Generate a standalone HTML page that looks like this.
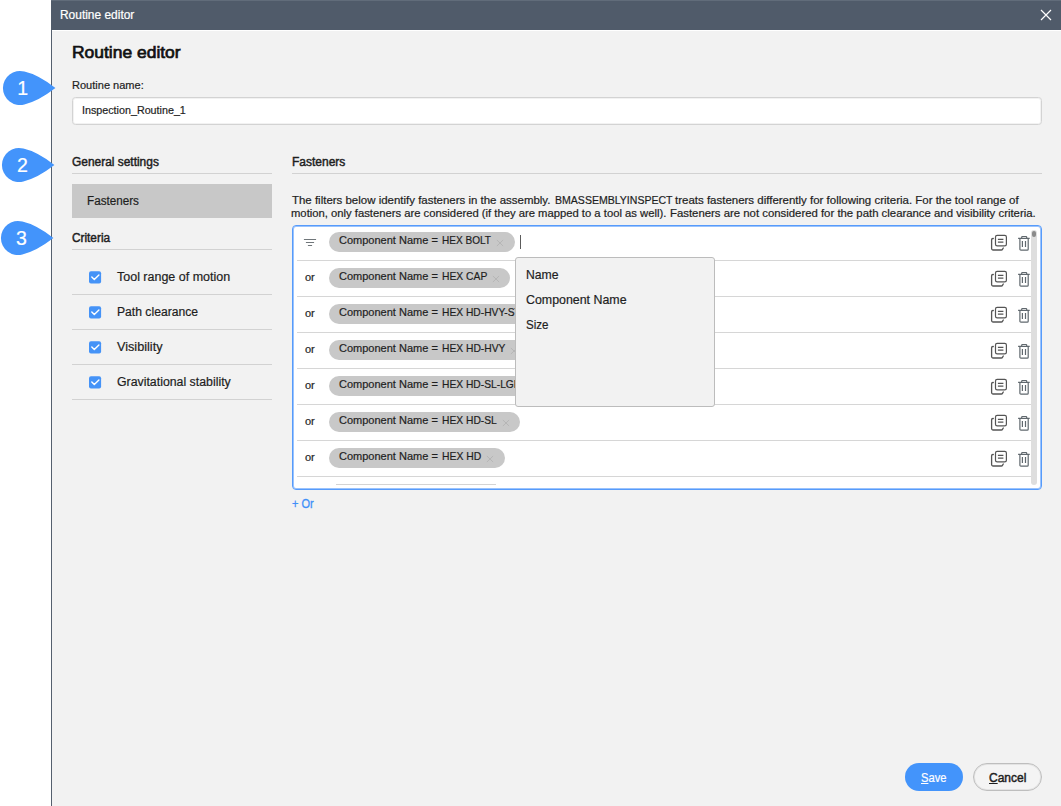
<!DOCTYPE html>
<html lang="en"><head><meta charset="utf-8"><title>Routine editor</title>
<style>
*{box-sizing:border-box;margin:0;padding:0}
html,body{width:1061px;height:806px;overflow:hidden;background:#fff}
body{font-family:"Liberation Sans",Arial,sans-serif;color:#1e1e1e;position:relative;font-size:12px}
.abs{position:absolute}
.t{position:absolute;white-space:nowrap;line-height:1;display:inline-block;transform-origin:0 50%;-webkit-text-stroke:0.2px currentColor}
#dlg{position:absolute;left:51px;top:0;width:1010px;height:806px;background:#f2f2f2;border-left:1px solid #55606e}
#tb{position:absolute;left:51px;top:0;width:1010px;height:30px;background:#505b6a;border-top:1px solid #616c7a}
#tbl{position:absolute;left:52px;top:30px;width:1009px;height:1px;background:#fff}
u{text-underline-offset:1px;text-decoration-thickness:1px}
.hr{position:absolute;height:1px;background:#d2d2d2}
.cb{position:absolute;left:89px;width:12px;height:12px;border-radius:2px;background:#4593f7}
.chip{position:absolute;left:329px;height:20px;border-radius:10px;background:#c8c8c8}
.sep{position:absolute;left:297px;width:734px;height:1px;background:#d6d6d6}
</style></head><body>
<div id="dlg"></div><div id="tb"></div><div id="tbl"></div>

<span class="t" id="t_tb" style="left:60.20px;top:9px;font-size:12px;transform:scaleX(0.9949);color:#fff;">Routine editor</span>
<svg class="abs" style="left:1040px;top:9px" width="12" height="12" viewBox="0 0 12 12"><path d="M1 1L11 11M11 1L1 11" stroke="#fff" stroke-width="1.2" fill="none"/></svg>
<svg class="abs" style="left:0px;top:68px" width="60" height="40" viewBox="0 0 60 40"><path d="M24.4 3.6Q38 6.6 55.4 20Q38 33.4 24.4 36.4A17 17 0 1 1 24.4 3.6Z" fill="#4394fb"/></svg>
<span class="t" id="t_m1" style="left:17.30px;top:79px;font-size:19.5px;transform:scaleX(1.0000);color:#fff;">1</span>
<svg class="abs" style="left:-1px;top:145px" width="60" height="40" viewBox="0 0 60 40"><path d="M24.4 3.6Q38 6.6 55.4 20Q38 33.4 24.4 36.4A17 17 0 1 1 24.4 3.6Z" fill="#4394fb"/></svg>
<span class="t" id="t_m2" style="left:17.00px;top:156px;font-size:19.5px;transform:scaleX(1.0000);color:#fff;">2</span>
<svg class="abs" style="left:-2px;top:218px" width="60" height="40" viewBox="0 0 60 40"><path d="M24.4 3.6Q38 6.6 55.4 20Q38 33.4 24.4 36.4A17 17 0 1 1 24.4 3.6Z" fill="#4394fb"/></svg>
<span class="t" id="t_m3" style="left:16.00px;top:229px;font-size:19.5px;transform:scaleX(1.0000);color:#fff;">3</span>
<span class="t" id="t_h1" style="left:71.74px;top:44px;font-size:17px;transform:scaleX(1.0263);-webkit-text-stroke:0.7px currentColor;color:#111;">Routine editor</span>
<span class="t" id="t_rn" style="left:72.20px;top:80px;font-size:11px;transform:scaleX(1.0029);">Routine name:</span>
<div class="abs" style="left:72px;top:97px;width:970px;height:28px;background:#fff;border:1px solid #d3d3d3;border-radius:3.5px;box-shadow:inset 0 0 0 1px rgba(211,211,211,.3)"></div>
<span class="t" id="t_in" style="left:82.30px;top:105px;font-size:11px;transform:scaleX(0.9756);">Inspection_Routine_1</span>
<span class="t" id="t_gs" style="left:71.76px;top:156px;font-size:12px;transform:scaleX(0.9938);-webkit-text-stroke:0.45px currentColor;">General settings</span>
<div class="hr" style="left:72px;top:173px;width:200px"></div>
<div class="abs" style="left:72px;top:184px;width:200px;height:34px;background:#c8c8c8"></div>
<span class="t" id="t_fl" style="left:87.00px;top:195px;font-size:12px;transform:scaleX(0.9739);">Fasteners</span>
<span class="t" id="t_cr" style="left:71.78px;top:232px;font-size:12px;transform:scaleX(0.9845);-webkit-text-stroke:0.45px currentColor;">Criteria</span>
<div class="hr" style="left:72px;top:249px;width:200px"></div>
<svg class="abs" style="left:88px;top:270px" width="15" height="15" viewBox="0 0 15 15"><rect x="1" y="1.35" width="12.1" height="12.2" rx="2" fill="#4593f7"/><path d="M3.8 7.1L6.3 9.6L10.9 5.1" stroke="#fff" stroke-width="1.4" fill="none" stroke-linecap="round" stroke-linejoin="round"/></svg>
<span class="t" id="t_c0" style="left:117.40px;top:271px;font-size:12px;transform:scaleX(1.0404);">Tool range of motion</span>
<div class="hr" style="left:72px;top:294px;width:200px"></div>
<svg class="abs" style="left:88px;top:305px" width="15" height="15" viewBox="0 0 15 15"><rect x="1" y="1.35" width="12.1" height="12.2" rx="2" fill="#4593f7"/><path d="M3.8 7.1L6.3 9.6L10.9 5.1" stroke="#fff" stroke-width="1.4" fill="none" stroke-linecap="round" stroke-linejoin="round"/></svg>
<span class="t" id="t_c1" style="left:117.40px;top:306px;font-size:12px;transform:scaleX(1.0125);">Path clearance</span>
<div class="hr" style="left:72px;top:329px;width:200px"></div>
<svg class="abs" style="left:88px;top:340px" width="15" height="15" viewBox="0 0 15 15"><rect x="1" y="1.35" width="12.1" height="12.2" rx="2" fill="#4593f7"/><path d="M3.8 7.1L6.3 9.6L10.9 5.1" stroke="#fff" stroke-width="1.4" fill="none" stroke-linecap="round" stroke-linejoin="round"/></svg>
<span class="t" id="t_c2" style="left:117.40px;top:341px;font-size:12px;transform:scaleX(1.0553);">Visibility</span>
<div class="hr" style="left:72px;top:364px;width:200px"></div>
<svg class="abs" style="left:88px;top:375px" width="15" height="15" viewBox="0 0 15 15"><rect x="1" y="1.35" width="12.1" height="12.2" rx="2" fill="#4593f7"/><path d="M3.8 7.1L6.3 9.6L10.9 5.1" stroke="#fff" stroke-width="1.4" fill="none" stroke-linecap="round" stroke-linejoin="round"/></svg>
<span class="t" id="t_c3" style="left:117.40px;top:376px;font-size:12px;transform:scaleX(1.0271);">Gravitational stability</span>
<div class="hr" style="left:72px;top:399px;width:200px"></div>
<span class="t" id="t_fh" style="left:291.64px;top:156px;font-size:12px;transform:scaleX(0.9987);-webkit-text-stroke:0.45px currentColor;">Fasteners</span>
<div class="hr" style="left:292px;top:173px;width:750px"></div>
<span class="t" id="t_d1a" style="left:291.75px;top:195px;font-size:11px;transform:scaleX(1.0419);">The filters below identify fasteners in the assembly.</span>
<span class="t" id="t_d1b" style="left:554.69px;top:195px;font-size:11px;transform:scaleX(0.9584);">BMASSEMBLYINSPECT</span>
<span class="t" id="t_d1c" style="left:674.64px;top:195px;font-size:11px;transform:scaleX(1.0433);">treats fasteners differently for following criteria. For the tool range of</span>
<span class="t" id="t_d2a" style="left:291.15px;top:208px;font-size:11px;transform:scaleX(1.0230);">motion, only fasteners are considered (if they are mapped to a tool as well).</span>
<span class="t" id="t_d2b" style="left:669.73px;top:208px;font-size:11px;transform:scaleX(1.0330);">Fasteners are not considered for the path clearance and visibility criteria.</span>
<div class="abs" style="left:292px;top:225px;width:750px;height:265px;background:#fff;border:1px solid #569bfb;border-radius:4px;box-shadow:inset 0 0 0 1px rgba(86,155,251,.6)"></div>
<div class="abs" style="left:1031px;top:229.5px;width:6px;height:255px;background:#dedede;border-radius:3px"></div>
<div class="abs" style="left:1032px;top:230.5px;width:4px;height:6.5px;background:#8a8a8a;border-radius:2px"></div>
<svg class="abs" style="left:303px;top:237px" width="14" height="10" viewBox="0 0 14 10"><path d="M1.3 2.5H12.7M3.3 5.5H10.7M5.3 8.5H8.7" stroke="#70767a" stroke-width="1" stroke-linecap="round" fill="none"/></svg>
<div class="abs" style="left:520px;top:235px;width:1px;height:14px;background:#5c5c5c"></div>
<div class="chip" id="chip0" style="top:232px;width:186px"></div>
<span class="t" id="t_ka0" style="left:338.63px;top:235px;font-size:11px;transform:scaleX(1.0008);">Component Name =</span>
<span class="t" id="t_kb0" style="left:441.55px;top:235px;font-size:11px;transform:scaleX(0.9143);">HEX BOLT</span>
<svg class="abs" style="left:496.3px;top:238.7px" width="8" height="8" viewBox="0 0 8 8"><path d="M0.9 1L7.1 7M7.1 1L0.9 7" stroke="#b6b6b6" stroke-width="1" fill="none"/></svg>
<div class="sep" style="top:260px"></div>
<svg class="abs" style="left:990px;top:234px" width="18" height="18" viewBox="0 0 18 18"><rect x="5.5" y="1.4" width="10.9" height="10.5" rx="1.7" fill="none" stroke="#555" stroke-width="1.2"/><path d="M7.9 5.4H13.4M7.9 8.1H13.4" stroke="#555" stroke-width="1.1" fill="none"/><path d="M3.3 4.5H2.9A1.3 1.3 0 0 0 1.6 5.8V14.5A1.5 1.5 0 0 0 3.1 16H11.2A1.6 1.6 0 0 0 12.6 15.1L13.3 14" stroke="#555" stroke-width="1.3" fill="none" stroke-linecap="round"/></svg>
<svg class="abs" style="left:1017px;top:234px" width="14" height="18" viewBox="0 0 14 18"><path d="M1.1 4.3H12.7M4.7 4.3V3.2A0.7 0.7 0 0 1 5.4 2.5H9A0.7 0.7 0 0 1 9.7 3.2V4.3M2.9 4.3V15.2A1 1 0 0 0 3.9 16.2H10.2A1 1 0 0 0 11.2 15.2V4.3M5.4 6.9V13M8.5 6.9V13" stroke="#60686e" stroke-width="1.2" fill="none"/></svg>
<div class="chip" id="chip1" style="top:268px;width:181px"></div>
<span class="t" id="t_ka1" style="left:338.63px;top:271px;font-size:11px;transform:scaleX(1.0008);">Component Name =</span>
<span class="t" id="t_kb1" style="left:441.53px;top:271px;font-size:11px;transform:scaleX(0.9388);">HEX CAP</span>
<svg class="abs" style="left:491.8px;top:274.7px" width="8" height="8" viewBox="0 0 8 8"><path d="M0.9 1L7.1 7M7.1 1L0.9 7" stroke="#b6b6b6" stroke-width="1" fill="none"/></svg>
<span class="t" id="t_o1" style="left:305.00px;top:272px;font-size:11px;transform:scaleX(1.0000);">or</span>
<div class="sep" style="top:296px"></div>
<svg class="abs" style="left:990px;top:270px" width="18" height="18" viewBox="0 0 18 18"><rect x="5.5" y="1.4" width="10.9" height="10.5" rx="1.7" fill="none" stroke="#555" stroke-width="1.2"/><path d="M7.9 5.4H13.4M7.9 8.1H13.4" stroke="#555" stroke-width="1.1" fill="none"/><path d="M3.3 4.5H2.9A1.3 1.3 0 0 0 1.6 5.8V14.5A1.5 1.5 0 0 0 3.1 16H11.2A1.6 1.6 0 0 0 12.6 15.1L13.3 14" stroke="#555" stroke-width="1.3" fill="none" stroke-linecap="round"/></svg>
<svg class="abs" style="left:1017px;top:270px" width="14" height="18" viewBox="0 0 14 18"><path d="M1.1 4.3H12.7M4.7 4.3V3.2A0.7 0.7 0 0 1 5.4 2.5H9A0.7 0.7 0 0 1 9.7 3.2V4.3M2.9 4.3V15.2A1 1 0 0 0 3.9 16.2H10.2A1 1 0 0 0 11.2 15.2V4.3M5.4 6.9V13M8.5 6.9V13" stroke="#60686e" stroke-width="1.2" fill="none"/></svg>
<div class="chip" id="chip2" style="top:304px;width:256px"></div>
<span class="t" id="t_ka2" style="left:338.63px;top:307px;font-size:11px;transform:scaleX(1.0008);">Component Name =</span>
<span class="t" id="t_kb2" style="left:441.53px;top:307px;font-size:11px;transform:scaleX(0.9330);">HEX HD-HVY-STRL</span>
<svg class="abs" style="left:566.0px;top:310.7px" width="8" height="8" viewBox="0 0 8 8"><path d="M0.9 1L7.1 7M7.1 1L0.9 7" stroke="#b6b6b6" stroke-width="1" fill="none"/></svg>
<span class="t" id="t_o2" style="left:305.00px;top:308px;font-size:11px;transform:scaleX(1.0000);">or</span>
<div class="sep" style="top:332px"></div>
<svg class="abs" style="left:990px;top:306px" width="18" height="18" viewBox="0 0 18 18"><rect x="5.5" y="1.4" width="10.9" height="10.5" rx="1.7" fill="none" stroke="#555" stroke-width="1.2"/><path d="M7.9 5.4H13.4M7.9 8.1H13.4" stroke="#555" stroke-width="1.1" fill="none"/><path d="M3.3 4.5H2.9A1.3 1.3 0 0 0 1.6 5.8V14.5A1.5 1.5 0 0 0 3.1 16H11.2A1.6 1.6 0 0 0 12.6 15.1L13.3 14" stroke="#555" stroke-width="1.3" fill="none" stroke-linecap="round"/></svg>
<svg class="abs" style="left:1017px;top:306px" width="14" height="18" viewBox="0 0 14 18"><path d="M1.1 4.3H12.7M4.7 4.3V3.2A0.7 0.7 0 0 1 5.4 2.5H9A0.7 0.7 0 0 1 9.7 3.2V4.3M2.9 4.3V15.2A1 1 0 0 0 3.9 16.2H10.2A1 1 0 0 0 11.2 15.2V4.3M5.4 6.9V13M8.5 6.9V13" stroke="#60686e" stroke-width="1.2" fill="none"/></svg>
<div class="chip" id="chip3" style="top:340px;width:200px"></div>
<span class="t" id="t_ka3" style="left:338.63px;top:343px;font-size:11px;transform:scaleX(1.0008);">Component Name =</span>
<span class="t" id="t_kb3" style="left:441.53px;top:343px;font-size:11px;transform:scaleX(0.9338);">HEX HD-HVY</span>
<svg class="abs" style="left:510.3px;top:346.7px" width="8" height="8" viewBox="0 0 8 8"><path d="M0.9 1L7.1 7M7.1 1L0.9 7" stroke="#b6b6b6" stroke-width="1" fill="none"/></svg>
<span class="t" id="t_o3" style="left:305.00px;top:344px;font-size:11px;transform:scaleX(1.0000);">or</span>
<div class="sep" style="top:368px"></div>
<svg class="abs" style="left:990px;top:342px" width="18" height="18" viewBox="0 0 18 18"><rect x="5.5" y="1.4" width="10.9" height="10.5" rx="1.7" fill="none" stroke="#555" stroke-width="1.2"/><path d="M7.9 5.4H13.4M7.9 8.1H13.4" stroke="#555" stroke-width="1.1" fill="none"/><path d="M3.3 4.5H2.9A1.3 1.3 0 0 0 1.6 5.8V14.5A1.5 1.5 0 0 0 3.1 16H11.2A1.6 1.6 0 0 0 12.6 15.1L13.3 14" stroke="#555" stroke-width="1.3" fill="none" stroke-linecap="round"/></svg>
<svg class="abs" style="left:1017px;top:342px" width="14" height="18" viewBox="0 0 14 18"><path d="M1.1 4.3H12.7M4.7 4.3V3.2A0.7 0.7 0 0 1 5.4 2.5H9A0.7 0.7 0 0 1 9.7 3.2V4.3M2.9 4.3V15.2A1 1 0 0 0 3.9 16.2H10.2A1 1 0 0 0 11.2 15.2V4.3M5.4 6.9V13M8.5 6.9V13" stroke="#60686e" stroke-width="1.2" fill="none"/></svg>
<div class="chip" id="chip4" style="top:376px;width:256px"></div>
<span class="t" id="t_ka4" style="left:338.63px;top:379px;font-size:11px;transform:scaleX(1.0008);">Component Name =</span>
<span class="t" id="t_kb4" style="left:441.53px;top:379px;font-size:11px;transform:scaleX(0.9330);">HEX HD-SL-LGE</span>
<svg class="abs" style="left:566.0px;top:382.7px" width="8" height="8" viewBox="0 0 8 8"><path d="M0.9 1L7.1 7M7.1 1L0.9 7" stroke="#b6b6b6" stroke-width="1" fill="none"/></svg>
<span class="t" id="t_o4" style="left:305.00px;top:380px;font-size:11px;transform:scaleX(1.0000);">or</span>
<div class="sep" style="top:404px"></div>
<svg class="abs" style="left:990px;top:378px" width="18" height="18" viewBox="0 0 18 18"><rect x="5.5" y="1.4" width="10.9" height="10.5" rx="1.7" fill="none" stroke="#555" stroke-width="1.2"/><path d="M7.9 5.4H13.4M7.9 8.1H13.4" stroke="#555" stroke-width="1.1" fill="none"/><path d="M3.3 4.5H2.9A1.3 1.3 0 0 0 1.6 5.8V14.5A1.5 1.5 0 0 0 3.1 16H11.2A1.6 1.6 0 0 0 12.6 15.1L13.3 14" stroke="#555" stroke-width="1.3" fill="none" stroke-linecap="round"/></svg>
<svg class="abs" style="left:1017px;top:378px" width="14" height="18" viewBox="0 0 14 18"><path d="M1.1 4.3H12.7M4.7 4.3V3.2A0.7 0.7 0 0 1 5.4 2.5H9A0.7 0.7 0 0 1 9.7 3.2V4.3M2.9 4.3V15.2A1 1 0 0 0 3.9 16.2H10.2A1 1 0 0 0 11.2 15.2V4.3M5.4 6.9V13M8.5 6.9V13" stroke="#60686e" stroke-width="1.2" fill="none"/></svg>
<div class="chip" id="chip5" style="top:412px;width:191px"></div>
<span class="t" id="t_ka5" style="left:338.63px;top:415px;font-size:11px;transform:scaleX(1.0008);">Component Name =</span>
<span class="t" id="t_kb5" style="left:441.53px;top:415px;font-size:11px;transform:scaleX(0.9339);">HEX HD-SL</span>
<svg class="abs" style="left:501.6px;top:418.7px" width="8" height="8" viewBox="0 0 8 8"><path d="M0.9 1L7.1 7M7.1 1L0.9 7" stroke="#b6b6b6" stroke-width="1" fill="none"/></svg>
<span class="t" id="t_o5" style="left:305.00px;top:416px;font-size:11px;transform:scaleX(1.0000);">or</span>
<div class="sep" style="top:440px"></div>
<svg class="abs" style="left:990px;top:414px" width="18" height="18" viewBox="0 0 18 18"><rect x="5.5" y="1.4" width="10.9" height="10.5" rx="1.7" fill="none" stroke="#555" stroke-width="1.2"/><path d="M7.9 5.4H13.4M7.9 8.1H13.4" stroke="#555" stroke-width="1.1" fill="none"/><path d="M3.3 4.5H2.9A1.3 1.3 0 0 0 1.6 5.8V14.5A1.5 1.5 0 0 0 3.1 16H11.2A1.6 1.6 0 0 0 12.6 15.1L13.3 14" stroke="#555" stroke-width="1.3" fill="none" stroke-linecap="round"/></svg>
<svg class="abs" style="left:1017px;top:414px" width="14" height="18" viewBox="0 0 14 18"><path d="M1.1 4.3H12.7M4.7 4.3V3.2A0.7 0.7 0 0 1 5.4 2.5H9A0.7 0.7 0 0 1 9.7 3.2V4.3M2.9 4.3V15.2A1 1 0 0 0 3.9 16.2H10.2A1 1 0 0 0 11.2 15.2V4.3M5.4 6.9V13M8.5 6.9V13" stroke="#60686e" stroke-width="1.2" fill="none"/></svg>
<div class="chip" id="chip6" style="top:448px;width:176px"></div>
<span class="t" id="t_ka6" style="left:338.63px;top:451px;font-size:11px;transform:scaleX(1.0008);">Component Name =</span>
<span class="t" id="t_kb6" style="left:441.52px;top:451px;font-size:11px;transform:scaleX(0.9444);">HEX HD</span>
<svg class="abs" style="left:486.0px;top:454.7px" width="8" height="8" viewBox="0 0 8 8"><path d="M0.9 1L7.1 7M7.1 1L0.9 7" stroke="#b6b6b6" stroke-width="1" fill="none"/></svg>
<span class="t" id="t_o6" style="left:305.00px;top:452px;font-size:11px;transform:scaleX(1.0000);">or</span>
<div class="sep" style="top:476px"></div>
<svg class="abs" style="left:990px;top:450px" width="18" height="18" viewBox="0 0 18 18"><rect x="5.5" y="1.4" width="10.9" height="10.5" rx="1.7" fill="none" stroke="#555" stroke-width="1.2"/><path d="M7.9 5.4H13.4M7.9 8.1H13.4" stroke="#555" stroke-width="1.1" fill="none"/><path d="M3.3 4.5H2.9A1.3 1.3 0 0 0 1.6 5.8V14.5A1.5 1.5 0 0 0 3.1 16H11.2A1.6 1.6 0 0 0 12.6 15.1L13.3 14" stroke="#555" stroke-width="1.3" fill="none" stroke-linecap="round"/></svg>
<svg class="abs" style="left:1017px;top:450px" width="14" height="18" viewBox="0 0 14 18"><path d="M1.1 4.3H12.7M4.7 4.3V3.2A0.7 0.7 0 0 1 5.4 2.5H9A0.7 0.7 0 0 1 9.7 3.2V4.3M2.9 4.3V15.2A1 1 0 0 0 3.9 16.2H10.2A1 1 0 0 0 11.2 15.2V4.3M5.4 6.9V13M8.5 6.9V13" stroke="#60686e" stroke-width="1.2" fill="none"/></svg>
<div class="abs" style="left:336px;top:484px;width:160px;height:1px;background:#d4d4d4"></div>
<div class="abs" style="left:515px;top:257px;width:200px;height:150px;background:#f2f2f2;border:1px solid #bcbcbc;border-radius:3px"></div>
<span class="t" id="t_p0" style="left:525.90px;top:268px;font-size:13px;transform:scaleX(0.9373);">Name</span>
<span class="t" id="t_p1" style="left:525.70px;top:293px;font-size:13px;transform:scaleX(0.9528);">Component Name</span>
<span class="t" id="t_p2" style="left:525.70px;top:318px;font-size:13px;transform:scaleX(0.8901);">Size</span>
<span class="t" id="t_or" style="left:292.00px;top:498px;font-size:12px;transform:scaleX(0.9174);color:#4090f8;-webkit-text-stroke:0.3px currentColor;">+ Or</span>
<div class="abs" style="left:905px;top:763px;width:58px;height:28px;border-radius:14px;background:#4394fb"></div>
<span class="t" id="t_sv" style="left:921.40px;top:772px;font-size:12px;transform:scaleX(0.9286);color:#fff;"><u>S</u>ave</span>
<div class="abs" style="left:973px;top:763px;width:69px;height:28px;border-radius:14px;background:#f4f4f4;border:1px solid #bebebe;box-shadow:inset 0 0 0 1px rgba(190,190,190,.3)"></div>
<span class="t" id="t_cn" style="left:988.61px;top:772px;font-size:12px;transform:scaleX(1.0001);-webkit-text-stroke:0.45px currentColor;"><u>C</u>ancel</span>
</body></html>
